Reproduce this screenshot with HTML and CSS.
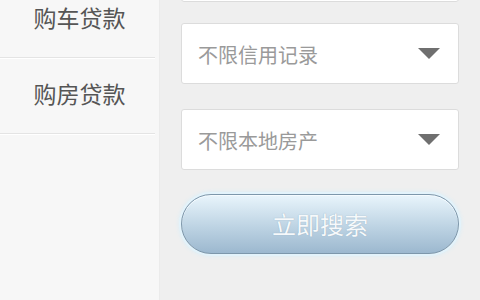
FILE: index.html
```html
<!DOCTYPE html>
<html lang="zh-CN">
<head>
  <meta charset="UTF-8">
  <meta name="viewport" content="width=device-width, initial-scale=1.0">
  <title>贷款搜索</title>
  <link rel="stylesheet" href="styles.css">
</head>
<body>
  <div class="page">
    <div class="side">
      <ul>
        <li>购车贷款</li>
        <li>购房贷款</li>
      </ul>
    </div>
    <div class="main">
      <div class="select first"></div>
      <div class="select second"><span>不限信用记录</span><i class="arrow"></i></div>
      <div class="select"><span>不限本地房产</span><i class="arrow"></i></div>
      <div class="btn">立即搜索</div>
    </div>
  </div>
</body>
</html>
```
FILE: styles.css
```css
*{
  margin: 0;
  padding: 0;
  box-sizing: border-box;
}
html,body{
  width: 480px;
  height: 300px;
  overflow: hidden;
  font-family: "Noto Sans CJK SC", "Noto Sans", sans-serif;
}
li{
  list-style: none;
}
.page{
  display: flex;
  height: 300px;
}
.side{
  width: 160px;
  background-color: #f7f7f7;
  border-right: 1px solid #ebebeb;
}
.side ul{
  margin-top: -18px;
}
.side li{
  height: 76px;
  line-height: 70px;
  text-align: center;
  font-size: 23px;
  color: #555;
  padding-left: 4px;
  margin-right: 4px;
  border-bottom: 1px solid #e4e4e4;
  box-shadow: 0 1px 0 #fff;
}
.main{
  flex: 1;
  background-color: #efefef;
  padding: 0 21px;
  display: flex;
  flex-direction: column;
}
.select{
  flex-shrink: 0;
  height: 61px;
  margin-top: 25px;
  background-color: #fff;
  border: 1px solid #dcdcdc;
  border-radius: 3px;
  display: flex;
  align-items: center;
  justify-content: space-between;
  padding: 0 18px 0 16px;
  font-size: 20px;
  color: #9a9a9a;
}
.select.first{
  margin-top: -59px;
}
.select.second{
  margin-top: 21px;
}
.select span{
  margin-top: 2px;
}
.arrow{
  width: 0;
  height: 0;
  border-left: 11px solid transparent;
  border-right: 11px solid transparent;
  border-top: 11px solid #6f6f6f;
}
.btn{
  flex-shrink: 0;
  height: 60px;
  margin-top: 24px;
  border-radius: 30px;
  border: 1px solid #7d97ab;
  background: linear-gradient(#e9f5fc, #bdd3e3 55%, #9cb8cf);
  box-shadow: 0 0 0 2px #e3f3fb, 0 0 4px 2px #d9eef8, inset 0 1px 0 #f5fbff;
  text-align: center;
  line-height: 58px;
  font-size: 24px;
  color: #f6f9fb;
  text-shadow: 0 0 1px #8aa5ba;
}
```
